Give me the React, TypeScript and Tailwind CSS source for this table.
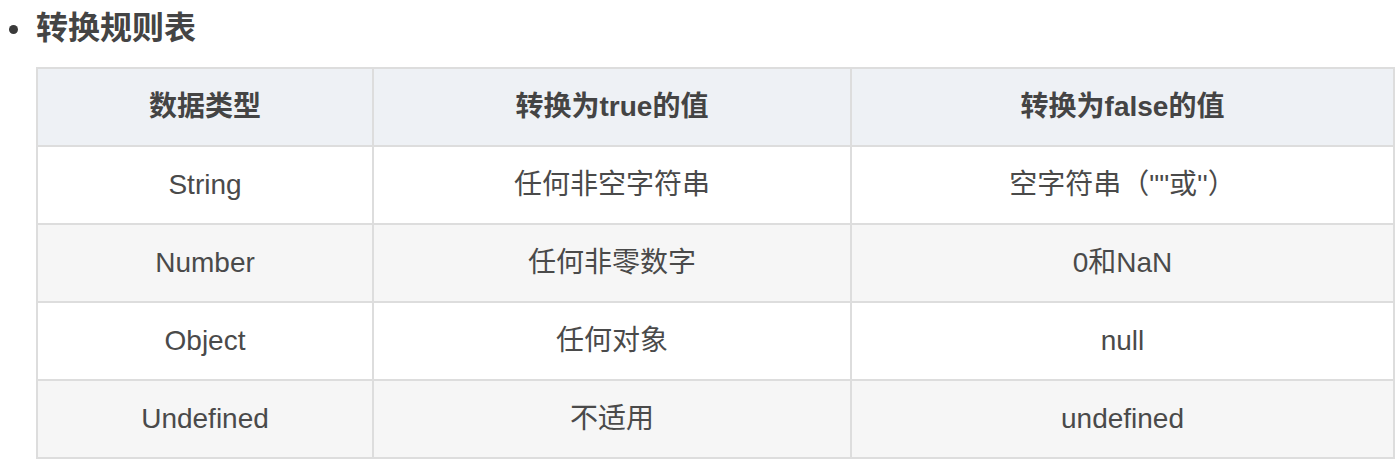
import React from "react";

const rows = [
  ["String", "任何非空字符串", "空字符串（\"\"或''）"],
  ["Number", "任何非零数字", "0和NaN"],
  ["Object", "任何对象", "null"],
  ["Undefined", "不适用", "undefined"],
];

export default function App() {
  const font = { fontFamily: '"Liberation Sans", "Noto Sans CJK SC", sans-serif' };
  return (
    <div className="w-[1395px] h-[473px] bg-white text-[#4a4a4a]" style={font}>
      <div className="h-[67px] flex items-start pt-[8px]">
        <div className="w-[36px] flex justify-start pl-[9px] pt-[17px]">
          <span className="block w-[9px] h-[9px] rounded-full bg-[#3a3a3a]" />
        </div>
        <h3 className="text-[32px] leading-[40px] font-bold text-[#444]">转换规则表</h3>
      </div>
      <div className="ml-[36px] w-[1359px] grid grid-cols-[336px_478px_543px] border-l-2 border-t-2 border-[#dddddd]">
        {["数据类型", "转换为true的值", "转换为false的值"].map((h) => (
          <div
            key={h}
            className="h-[78px] flex items-center justify-center border-r-2 border-b-2 border-[#dddddd] bg-[#eef1f5] text-[28px] font-bold text-[#444]"
          >
            {h}
          </div>
        ))}
        {rows.map((r, i) =>
          r.map((c, j) => (
            <div
              key={i + "-" + j}
              className={
                "h-[78px] flex items-center justify-center border-r-2 border-b-2 border-[#dddddd] text-[28px] " +
                (i % 2 === 1 ? "bg-[#f6f6f6]" : "bg-white")
              }
            >
              {c}
            </div>
          ))
        )}
      </div>
    </div>
  );
}
